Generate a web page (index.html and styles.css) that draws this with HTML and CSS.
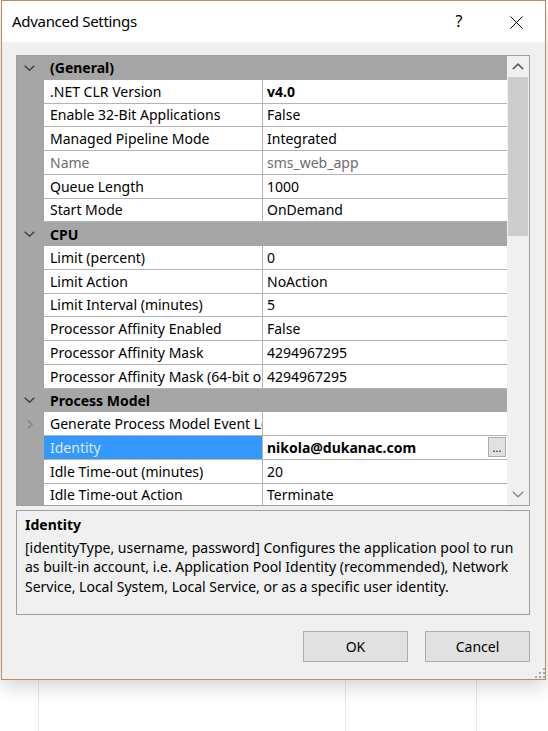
FILE: index.html
```html
<!DOCTYPE html>
<html lang="en">
<head>
<meta charset="utf-8">
<title>Advanced Settings</title>
<link rel="stylesheet" href="styles.css">
</head>
<body>
<div class="window">
  <div class="titlebar">
    <span class="title">Advanced Settings</span>
    <span class="help">?</span>
    <span class="close"><svg width="13" height="13" viewBox="0 0 13 13"><path d="M0.5 0.5L12.5 12.5M12.5 0.5L0.5 12.5" stroke="#000" stroke-width="1" fill="none"/></svg></span>
  </div>
  <div class="content">
    <div class="grid">
      <div class="rows">
        <div class="cat"><div class="margin"><svg class="chev" width="11" height="6" viewBox="0 0 11 6"><path d="M0.7 0.7L5.5 5.2L10.3 0.7" stroke="#3c3c3c" stroke-width="1.4" fill="none"/></svg></div><div class="cat-label">(General)</div></div>
        <div class="row"><div class="margin"></div><div class="name">.NET CLR Version</div><div class="value bold">v4.0</div></div>
        <div class="row"><div class="margin"></div><div class="name">Enable 32-Bit Applications</div><div class="value">False</div></div>
        <div class="row"><div class="margin"></div><div class="name">Managed Pipeline Mode</div><div class="value">Integrated</div></div>
        <div class="row ro"><div class="margin"></div><div class="name">Name</div><div class="value">sms_web_app</div></div>
        <div class="row"><div class="margin"></div><div class="name">Queue Length</div><div class="value">1000</div></div>
        <div class="row"><div class="margin"></div><div class="name">Start Mode</div><div class="value">OnDemand</div></div>
        <div class="cat"><div class="margin"><svg class="chev" width="11" height="6" viewBox="0 0 11 6"><path d="M0.7 0.7L5.5 5.2L10.3 0.7" stroke="#3c3c3c" stroke-width="1.4" fill="none"/></svg></div><div class="cat-label">CPU</div></div>
        <div class="row"><div class="margin"></div><div class="name">Limit (percent)</div><div class="value">0</div></div>
        <div class="row"><div class="margin"></div><div class="name">Limit Action</div><div class="value">NoAction</div></div>
        <div class="row"><div class="margin"></div><div class="name">Limit Interval (minutes)</div><div class="value">5</div></div>
        <div class="row"><div class="margin"></div><div class="name">Processor Affinity Enabled</div><div class="value">False</div></div>
        <div class="row"><div class="margin"></div><div class="name">Processor Affinity Mask</div><div class="value">4294967295</div></div>
        <div class="row"><div class="margin"></div><div class="name">Processor Affinity Mask (64-bit option)</div><div class="value">4294967295</div></div>
        <div class="cat"><div class="margin"><svg class="chev" width="11" height="6" viewBox="0 0 11 6"><path d="M0.7 0.7L5.5 5.2L10.3 0.7" stroke="#3c3c3c" stroke-width="1.4" fill="none"/></svg></div><div class="cat-label">Process Model</div></div>
        <div class="row"><div class="margin expand"><svg width="6" height="9" viewBox="0 0 6 9"><path d="M0.7 0.6L5 4.5L0.7 8.4" stroke="#808080" stroke-width="1.3" fill="none"/></svg></div><div class="name">Generate Process Model Event Log Entry</div><div class="value"></div></div>
        <div class="row sel"><div class="margin"></div><div class="name">Identity</div><div class="value bold"><span>nikola@dukanac.com</span><span class="dots">...</span></div></div>
        <div class="row"><div class="margin"></div><div class="name">Idle Time-out (minutes)</div><div class="value">20</div></div>
        <div class="row"><div class="margin"></div><div class="name">Idle Time-out Action</div><div class="value">Terminate</div></div>
        <div class="row"><div class="margin"></div><div class="name">Load User Profile</div><div class="value">True</div></div>
      </div>
      <div class="vscroll">
        <div class="sb-btn"><svg width="12" height="7" viewBox="0 0 12 7"><path d="M0.8 6.2L6 1.2L11.2 6.2" stroke="#606060" stroke-width="1.6" fill="none"/></svg></div>
        <div class="thumb"></div>
        <div class="track"></div>
        <div class="sb-btn"><svg width="12" height="7" viewBox="0 0 12 7"><path d="M0.8 0.8L6 5.8L11.2 0.8" stroke="#8a8a8a" stroke-width="1.4" fill="none"/></svg></div>
      </div>
    </div>
    <div class="desc">
      <div class="desc-title">Identity</div>
      <div class="desc-line">[identityType, username, password] Configures the application pool to run</div>
      <div class="desc-line">as built-in account, i.e. Application Pool Identity (recommended), Network</div>
      <div class="desc-line">Service, Local System, Local Service, or as a specific user identity.</div>
    </div>
    <div class="buttons">
      <button class="btn">OK</button>
      <button class="btn">Cancel</button>
    </div>
  </div>
  <svg class="grip" width="12" height="10" viewBox="0 0 12 10"><g fill="#a9a9a9"><rect x="10" y="0" width="2" height="2"/><rect x="6" y="4" width="2" height="2"/><rect x="10" y="4" width="2" height="2"/><rect x="2" y="8" width="2" height="2"/><rect x="6" y="8" width="2" height="2"/><rect x="10" y="8" width="2" height="2"/></g></svg>
</div>
</body>
</html>
```

FILE: styles.css
```css
* { box-sizing: border-box; }
html, body { margin: 0; padding: 0; }
body {
  width: 548px;
  height: 731px;
  overflow: hidden;
  font-family: "Noto Sans", "DejaVu Sans", sans-serif;
  color: #000;
  background:
    linear-gradient(#e3eaf5, #e3eaf5) 38px 0 / 1px 100% no-repeat,
    linear-gradient(#e3eaf5, #e3eaf5) 345px 0 / 1px 100% no-repeat,
    linear-gradient(#e3eaf5, #e3eaf5) 476px 0 / 1px 100% no-repeat,
    #fff;
}
.window {
  position: relative;
  margin-left: 1px;
  width: 545px;
  height: 680px;
  border: 1px solid #bd8b62;
  background: #f0f0f0;
  display: flex;
  flex-direction: column;
  box-shadow: 0 6px 20px rgba(0, 0, 0, 0.18);
}
.titlebar {
  flex: none;
  height: 41px;
  background: #fff;
  display: flex;
  align-items: center;
  padding-left: 10px;
}
.title {
  flex: 1;
  font-size: 15px;
  letter-spacing: -0.3px;
  line-height: 41px;
}
.help {
  width: 46px;
  text-align: center;
  font-size: 16px;
  line-height: 41px;
}
.close {
  width: 46px;
  margin-left: 11px;
  margin-right: 6px;
  display: flex;
  justify-content: center;
  padding-top: 2px;
}
.content {
  flex: 1;
  display: flex;
  flex-direction: column;
  padding: 13px 15px 0 14px;
}
.grid {
  height: 451px;
  border: 1px solid #a0a0a0;
  display: flex;
  background: #fff;
}
.rows {
  width: 490px;
  height: 449px;
  overflow: hidden;
  flex: none;
}
.row, .cat {
  display: flex;
  height: 23.75px;
  font-size: 14px;
}
.cat {
  background: #a6a6a6;
  font-weight: bold;
  align-items: center;
}
.margin {
  flex: none;
  width: 27px;
  height: 100%;
  background: #a6a6a6;
  display: flex;
  align-items: center;
  padding-left: 7px;
}
.margin.expand { padding-left: 10px; }
.cat-label { padding-left: 6px; }
.name {
  flex: none;
  width: 219px;
  height: 100%;
  border-right: 1px solid #b4b4b4;
  border-bottom: 1px solid #b4b4b4;
  padding-left: 6px;
  white-space: nowrap;
  overflow: hidden;
  display: flex;
  align-items: center;
}
.value {
  flex: 1;
  height: 100%;
  border-bottom: 1px solid #b4b4b4;
  padding-left: 4px;
  white-space: nowrap;
  overflow: hidden;
  display: flex;
  align-items: center;
}
.bold { font-weight: bold; }
.ro .name, .ro .value { color: #6d6d6d; }
.sel .name { background: #3399ff; color: #dcebff; }
.dots {
  margin-left: auto;
  margin-right: 1px;
  width: 18px;
  height: 20px;
  background: #e1e1e1;
  border: 1px solid #adadad;
  font-size: 11px;
  font-weight: normal;
  line-height: 1;
  display: flex;
  align-items: flex-end;
  justify-content: center;
  padding-bottom: 3px;
}
.vscroll {
  flex: none;
  width: 22px;
  background: #f0f0f0;
  display: flex;
  flex-direction: column;
}
.sb-btn {
  flex: none;
  height: 21px;
  display: flex;
  align-items: center;
  justify-content: center;
}
.thumb {
  flex: none;
  height: 159px;
  width: 20px;
  margin-left: 1px;
  background: #cdcdcd;
}
.track { flex: 1; }
.desc {
  margin-top: 4px;
  height: 105px;
  border: 1px solid #a0a0a0;
  padding: 4px 8px;
  font-size: 14px;
  line-height: 19.6px;
}
.desc-title { font-weight: bold; margin-bottom: 3px; }
.desc-line { white-space: nowrap; }
.buttons {
  display: flex;
  justify-content: flex-end;
  gap: 17px;
  margin-top: 16px;
}
.btn {
  width: 105px;
  height: 31px;
  padding: 0;
  background: #e1e1e1;
  border: 1px solid #adadad;
  font-family: "Noto Sans", "DejaVu Sans", sans-serif;
  font-size: 14px;
  color: #000;
}
.grip {
  position: absolute;
  right: 0;
  bottom: 1px;
}
```
